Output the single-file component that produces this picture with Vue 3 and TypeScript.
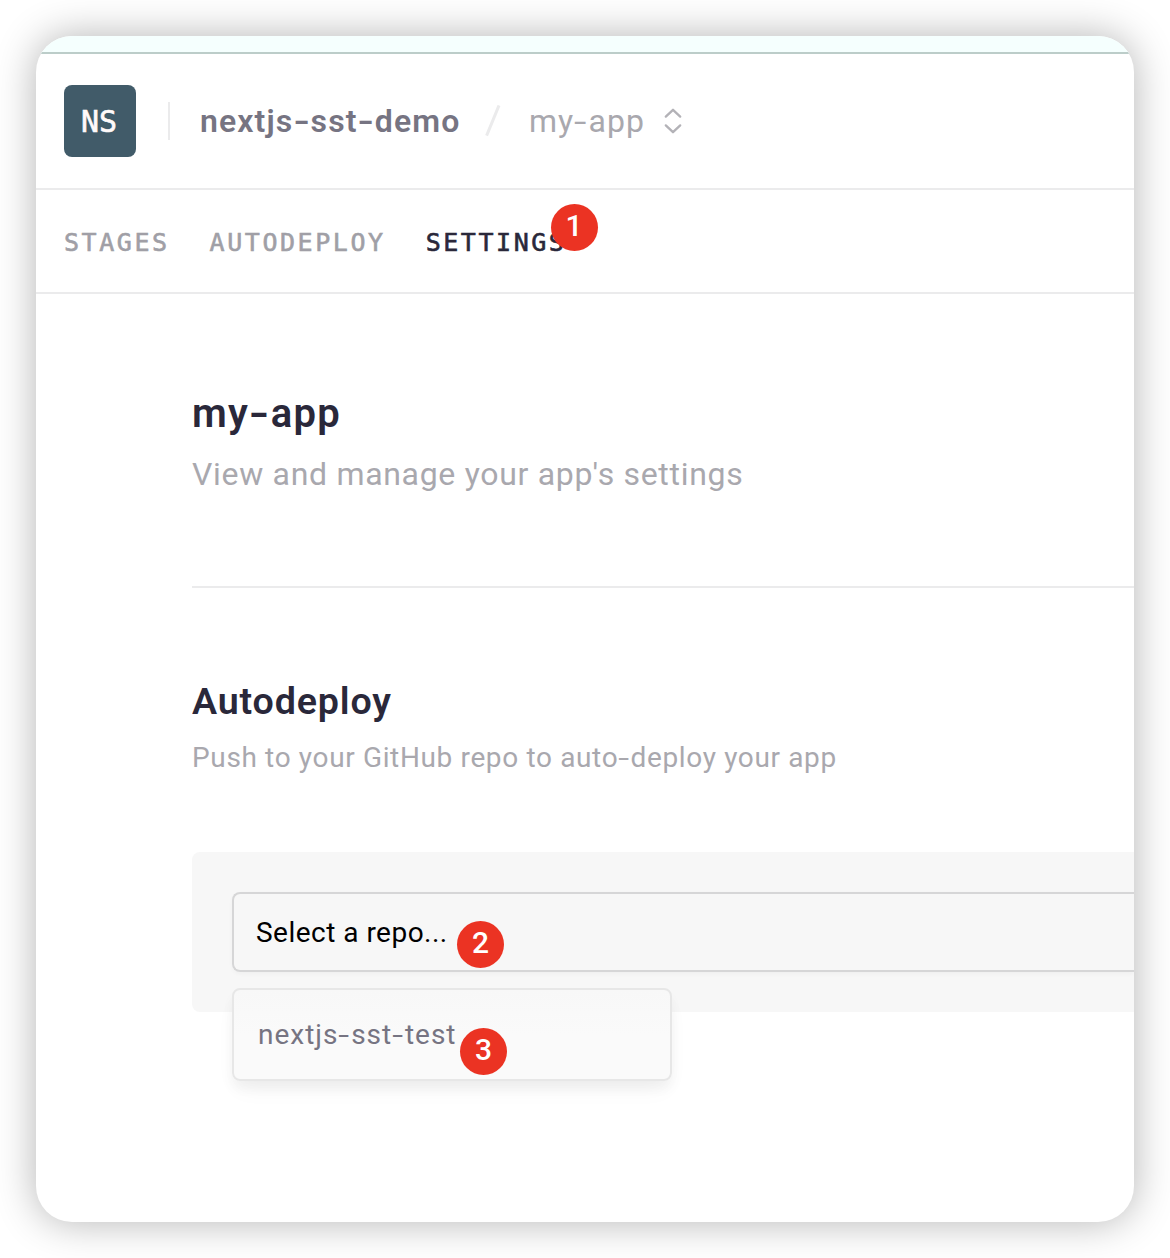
<script setup lang="ts">
import { h, type FunctionalComponent } from 'vue'

interface Tab {
  label: string
  active?: boolean
  step?: number
}

const tabs: Tab[] = [
  { label: 'Stages' },
  { label: 'Autodeploy' },
  { label: 'Settings', active: true, step: 1 },
]
const repos: string[] = ['nextjs-sst-test']

// Renders text with wide hyphens.
const Dashed: FunctionalComponent<{ text: string }> = (props) =>
  h(
    'span',
    props.text.split(/(-)/).map((part) => (part === '-' ? h('span', { class: 'dash' }, '-') : part)),
  )
Dashed.props = ['text']
</script>

<template>
  <div class="page">
    <main class="card">
      <div class="strip"></div>

      <header class="header">
        <div class="avatar"><span>NS</span></div>
        <div class="bar"></div>
        <Dashed class="org" text="nextjs-sst-demo" />
        <svg class="slash" width="16" height="32" viewBox="0 0 16 32">
          <path d="M1.6 30.6 L14 0.4" stroke="#ebebec" stroke-width="3" fill="none" />
        </svg>
        <Dashed class="app" text="my-app" />
        <svg class="updown" width="18" height="26" viewBox="0 0 18 26">
          <path
            d="M1.8 8.6 L9 1.8 L16.2 8.6 M1.8 17.4 L9 24.2 L16.2 17.4"
            stroke="#b3b2b7"
            stroke-width="2.3"
            stroke-linecap="round"
            stroke-linejoin="round"
            fill="none"
          />
        </svg>
      </header>

      <nav class="tabs">
        <span v-for="tab in tabs" :key="tab.label" class="tab" :class="{ active: tab.active }">
          {{ tab.label }}
          <span v-if="tab.step" class="badge badge-tab">{{ tab.step }}</span>
        </span>
      </nav>

      <div class="content">
        <section class="intro">
          <h1><Dashed text="my-app" /></h1>
          <p>View and manage your app's settings</p>
        </section>

        <section class="deploy">
          <h2>Autodeploy</h2>
          <p><Dashed text="Push to your GitHub repo to auto-deploy your app" /></p>

          <div class="panel">
            <div class="select">
              <span class="placeholder">Select a repo...</span>
              <span class="badge badge-select">2</span>
              <div class="menu">
                <Dashed v-for="repo in repos" :key="repo" class="option" :text="repo" />
                <span class="badge badge-option">3</span>
              </div>
            </div>
          </div>
        </section>
      </div>
    </main>
  </div>
</template>

<style>
body {
  margin: 0;
  background: #fff;
}
.dash {
  display: inline-block;
  margin: 0 0.07em;
  transform: scaleX(1.4);
}
</style>

<style scoped>
.page {
  box-sizing: border-box;
  width: 1170px;
  height: 1258px;
  padding: 36px;
  overflow: hidden;
  background: #fff;
  font-family: Roboto, 'Liberation Sans', sans-serif;
}
.card {
  width: 1098px;
  height: 1186px;
  overflow: hidden;
  border-radius: 36px;
  background: #fff;
  box-shadow: 0 0 40px rgba(0, 0, 0, 0.3);
}
.strip {
  height: 16px;
  background: #f5fffe;
  border-bottom: 2px solid #bccdc9;
}
.header {
  display: flex;
  align-items: center;
  height: 134px;
  padding-left: 28px;
  border-bottom: 2px solid #ebebec;
  font-size: 32px;
  white-space: nowrap;
}
.avatar {
  display: flex;
  align-items: center;
  justify-content: center;
  box-sizing: border-box;
  width: 72px;
  height: 72px;
  padding: 2px 2px 0 0;
  border-radius: 8px;
  background: #415b69;
  color: #fffafa;
  font: 30px/36px 'DejaVu Sans Mono', monospace;
  -webkit-text-stroke: 0.6px #fffafa;
}
.bar {
  width: 2px;
  height: 38px;
  margin: 0 30px 0 32px;
  background: #ebebec;
}
.org {
  width: 285px;
  color: #767482;
  font-weight: 600;
  letter-spacing: 1.1px;
}
.slash {
  width: 16px;
  margin-right: 28px;
}
.app {
  width: 135px;
  color: #a9a8ae;
  letter-spacing: 1px;
}
.tabs {
  display: flex;
  align-items: center;
  gap: 40px;
  height: 98px;
  padding: 4px 0 0 28px;
  border-bottom: 2px solid #ebebec;
  font: 25px/32px 'DejaVu Sans Mono', monospace;
  letter-spacing: 2.55px;
  text-transform: uppercase;
}
.tab {
  position: relative;
  color: #a09fa6;
  -webkit-text-stroke: 0.6px currentColor;
}
.tab.active {
  color: #2a283a;
}
.badge {
  position: absolute;
  width: 47px;
  height: 47px;
  border-radius: 50%;
  background: #eb3323;
  color: #fff;
  font: 500 30px/44px Roboto, sans-serif;
  letter-spacing: 0;
  text-align: center;
  -webkit-text-stroke: 0;
}
.badge-tab {
  left: 125px;
  top: -23px;
}
.badge-select {
  left: 223px;
  top: 27px;
}
.badge-option {
  left: 226px;
  top: 38px;
}
.content {
  padding: 96px 0 0 156px;
}
h1,
h2,
p {
  margin: 0;
  white-space: nowrap;
}
h1,
h2 {
  color: #2a283a;
  font-weight: 600;
}
p {
  color: #a9a8ae;
}
.intro {
  padding-bottom: 92px;
  border-bottom: 2px solid #ebebec;
}
h1 {
  font-size: 40px;
  line-height: 48px;
  letter-spacing: 1.3px;
}
.intro p {
  margin-top: 16px;
  font-size: 32px;
  line-height: 40px;
  letter-spacing: 0.69px;
}
.deploy {
  padding-top: 92px;
}
h2 {
  font-size: 36px;
  line-height: 44px;
  letter-spacing: 0.8px;
  transform: scaleX(1.045);
  transform-origin: left;
}
.deploy p {
  margin-top: 16px;
  font-size: 28px;
  line-height: 36px;
  letter-spacing: 0.64px;
}
.panel {
  box-sizing: border-box;
  height: 160px;
  margin-top: 76px;
  padding: 40px 0 0 40px;
  border-radius: 8px 0 0 8px;
  background: #f7f7f7;
}
.select {
  position: relative;
  display: flex;
  align-items: center;
  box-sizing: border-box;
  height: 80px;
  padding-left: 22px;
  border: 2px solid #d6d6d7;
  border-right: 0;
  border-radius: 8px 0 0 8px;
  box-shadow: 0 2px 4px rgba(0, 0, 0, 0.03);
  color: #000;
  font-size: 28px;
  line-height: 36px;
}
.placeholder {
  padding-top: 2px;
  letter-spacing: 0.48px;
}
.menu {
  position: absolute;
  left: -2px;
  top: 94px;
  display: flex;
  align-items: center;
  box-sizing: border-box;
  width: 440px;
  height: 93px;
  padding-left: 24px;
  border: 2px solid #e7e7e7;
  border-radius: 8px;
  background: linear-gradient(#f8f8f8, #fafafa 50%);
  box-shadow: 0 8px 12px rgba(0, 0, 0, 0.04), 0 12px 24px -6px rgba(0, 0, 0, 0.05);
}
.option {
  color: #767482;
  letter-spacing: 1px;
}
</style>
